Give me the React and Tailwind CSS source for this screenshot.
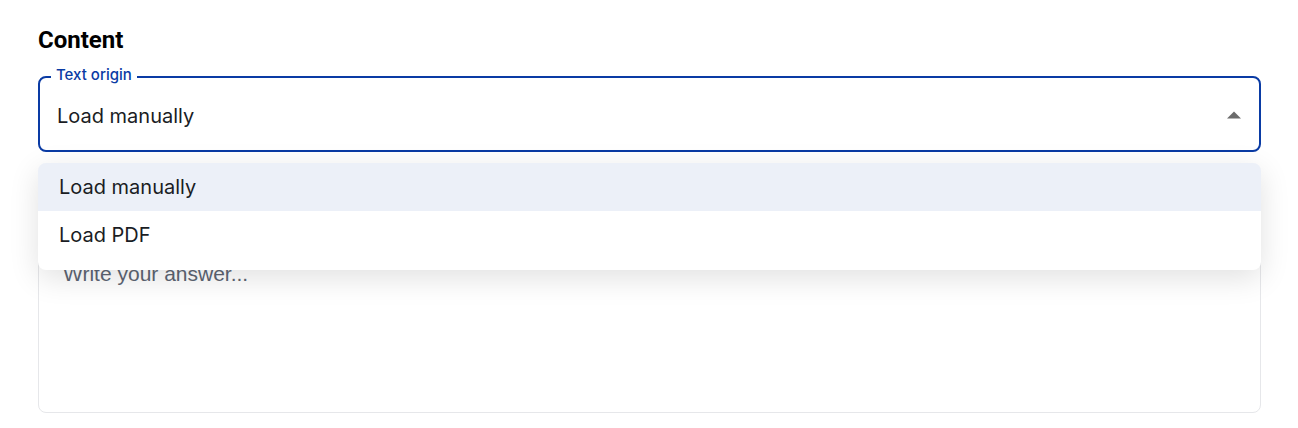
import React from "react";

export default function App() {
  return (
    <div className="w-[1298px] h-[428px] bg-white relative" style={{ fontFamily: "Inter, 'Noto Sans', sans-serif" }}>
      <div className="pl-[38px] pr-[37px] pt-[26px]">
        <h2 className="text-[24px] leading-[28px] font-bold text-black" style={{ fontFamily: "Roboto, sans-serif" }}>Content</h2>
        <div className="relative mt-[22px]">
          <div className="h-[76px] rounded-[8px] border-2 border-[#0a3ba4] flex items-center pl-[17px] pr-[17px] bg-white">
            <span className="text-[20px] text-[#1a1d24] flex-1 pt-[3px]">Load manually</span>
            <svg width="14" height="8" viewBox="0 0 14 8" className="mr-[1px] mt-[1px]">
              <path d="M0 7.5 L7 0.5 L14 7.5 Z" fill="#6b6b6b" />
            </svg>
          </div>
          <span className="absolute left-[13px] -top-[10px] px-[5px] bg-white text-[15px] leading-[18px] font-medium text-[#0a3ba4]">Text origin</span>
        </div>
        <div className="relative mt-[11px]">
          <div className="h-[250px] rounded-[8px] border border-[#e6e7ea] pt-[94px] pl-[24px]">
            <span className="text-[21px] text-[#5d6573]" style={{ fontFamily: "'Liberation Sans', Arial, sans-serif" }}>Write your answer...</span>
          </div>
          <div className="absolute left-0 right-0 top-0 bg-white rounded-[8px] pb-[11px] shadow-[0_8px_30px_rgba(0,0,0,0.12)] overflow-hidden">
            <div className="h-[48px] bg-[#ecf0f8] flex items-center pl-[21px] text-[20px] text-[#1a1d24]">Load manually</div>
            <div className="h-[48px] flex items-center pl-[21px] text-[20px] text-[#1a1d24]">Load PDF</div>
          </div>
        </div>
      </div>
    </div>
  );
}
